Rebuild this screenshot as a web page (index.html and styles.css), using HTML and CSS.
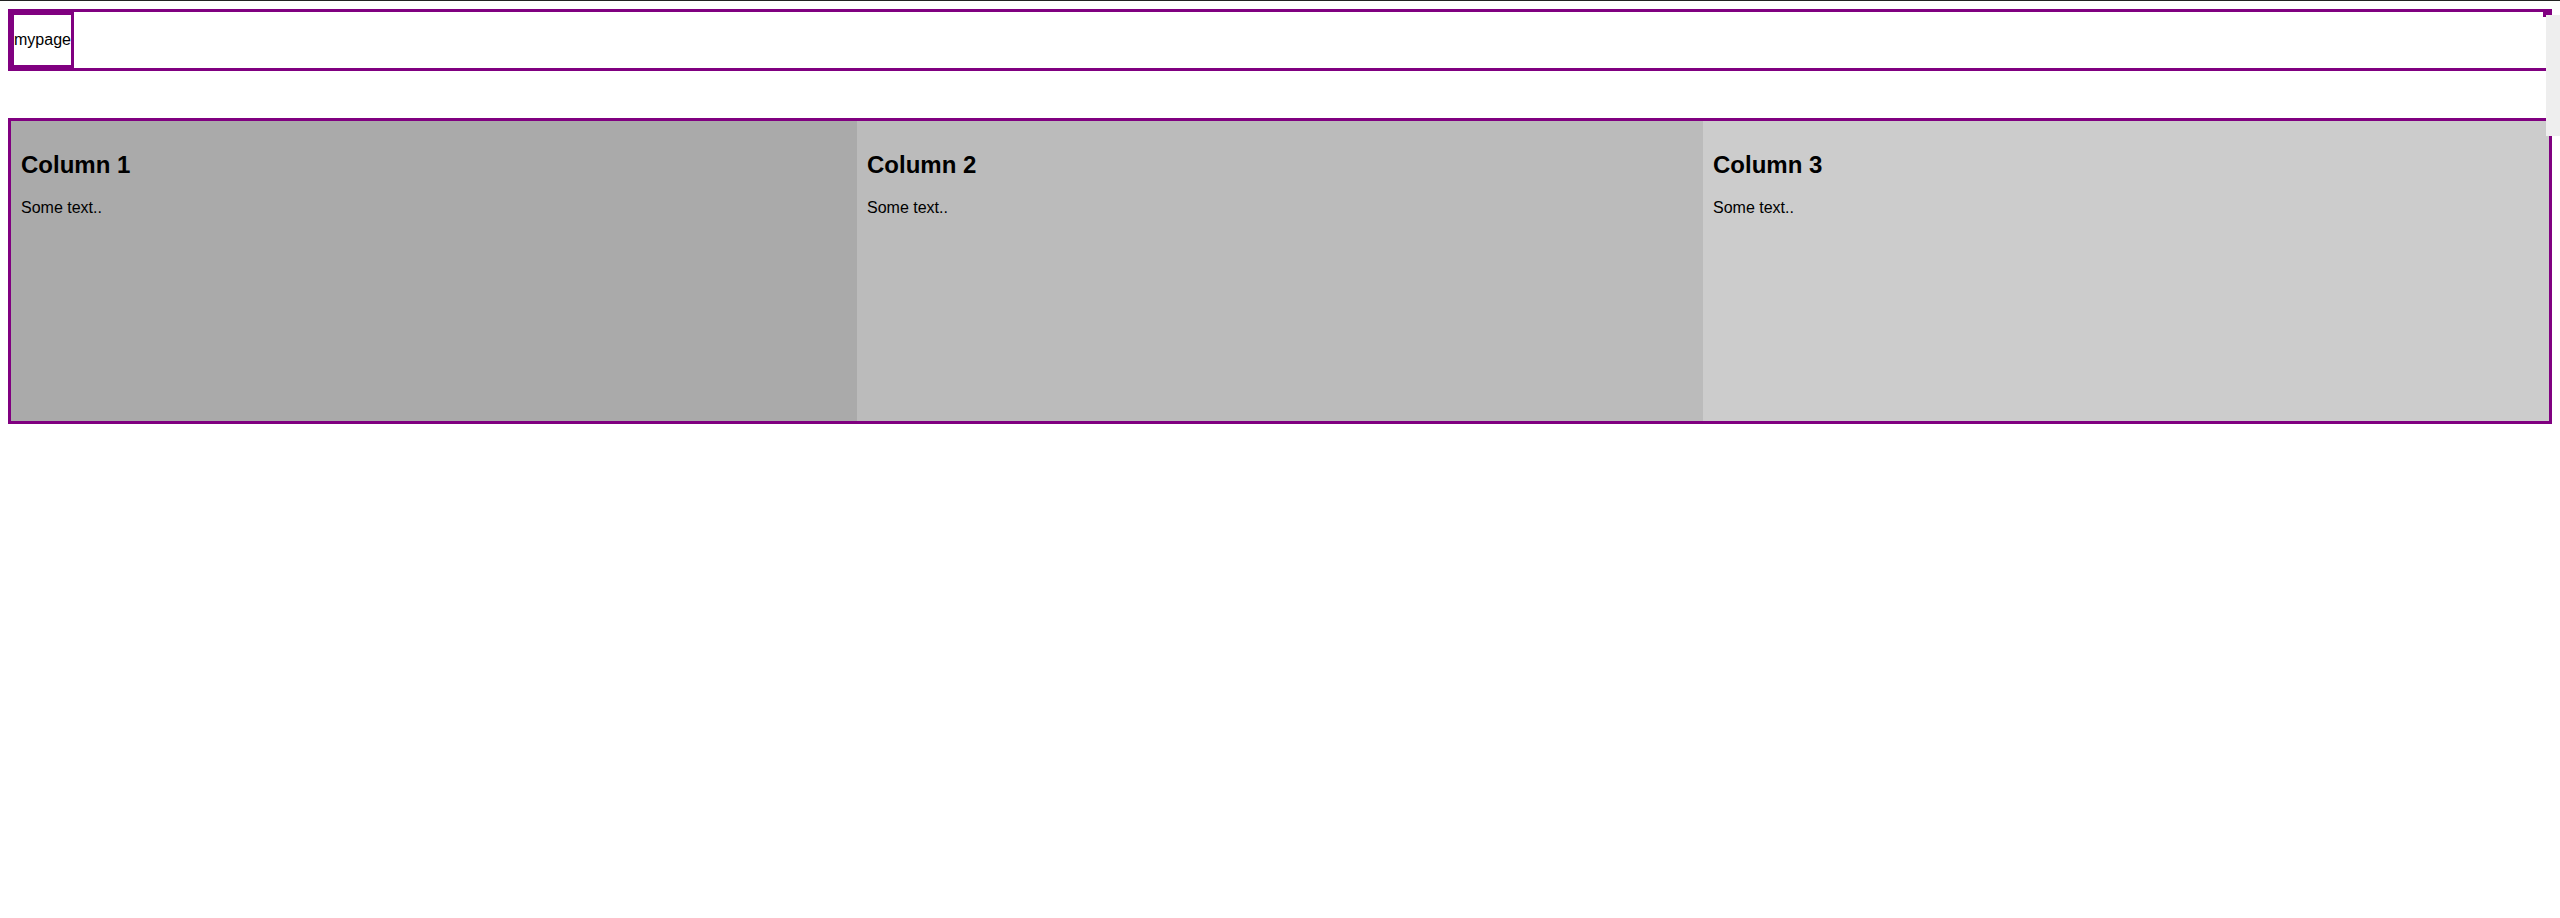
FILE: index.html
```html
<!DOCTYPE html>
<html lang="en">
<head>
<meta charset="utf-8">
<title>mypage</title>
<link rel="stylesheet" href="styles.css">
</head>
<body>
  <div class="top-line"></div>
  <header class="site-header">
    <div class="logo">mypage</div>
  </header>
  <div class="menu-corner"></div>
  <div class="menu-panel"></div>
  <main class="row">
    <section class="column col-1">
      <h2>Column 1</h2>
      <p>Some text..</p>
    </section>
    <section class="column col-2">
      <h2>Column 2</h2>
      <p>Some text..</p>
    </section>
    <section class="column col-3">
      <h2>Column 3</h2>
      <p>Some text..</p>
    </section>
  </main>
</body>
</html>
```

FILE: styles.css
```css
body {
  margin: 9px 8px 8px;
  font-family: "Liberation Sans", Arial, sans-serif;
  color: #000;
  background: #fff;
}
.top-line {
  position: absolute;
  left: 0;
  top: 0;
  width: 100%;
  height: 1px;
  background: #222222;
}
.site-header {
  display: flex;
  border: 3px solid #800080;
}
.logo {
  display: flex;
  align-items: center;
  height: 50px;
  border: 3px solid #800080;
  font-size: 16px;
}
.menu-corner {
  position: absolute;
  left: 2543px;
  top: 12px;
  width: 9px;
  height: 5px;
  background: #800080;
}
.menu-panel {
  position: absolute;
  left: 2546px;
  top: 15px;
  width: 14px;
  height: 121px;
  background: #eeeeee;
}
.row {
  display: flex;
  margin-top: 47px;
  border: 3px solid #800080;
}
.column {
  flex: 1 1 0;
  height: 300px;
  padding: 10px;
  box-sizing: border-box;
}
.column h2 {
  font-size: 24px;
  margin: 19.92px 0;
}
.column p {
  font-size: 16px;
  margin: 16px 0;
}
.col-1 { background: #aaaaaa; }
.col-2 { background: #bbbbbb; }
.col-3 { background: #cccccc; }
```
